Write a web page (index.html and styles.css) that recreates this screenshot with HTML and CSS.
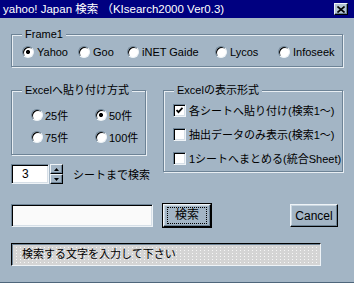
FILE: index.html
```html
<!DOCTYPE html>
<html lang="ja">
<head>
    <meta charset="UTF-8">
    <title>yahoo! Japan 検索</title>
    <link rel="stylesheet" href="styles.css">
</head>
<body>
    <div class="window">
        <div class="titlebar">
            <span class="title">yahoo! Japan 検索 （KIsearch2000 Ver0.3)</span>
            <button class="close" type="button">
                <svg width="8" height="7" viewBox="0 0 8 7"><path d="M0.5 0.5 L7.5 6.5 M7.5 0.5 L0.5 6.5" stroke="#000" stroke-width="1.6"/></svg>
            </button>
        </div>

        <div class="client">
            <div class="group frame1">
                <div class="group-title">Frame1</div>
                <div class="engines">
                    <div class="opt"><span class="radio on"></span>Yahoo</div>
                    <div class="opt"><span class="radio"></span>Goo</div>
                    <div class="opt"><span class="radio"></span>iNET Gaide</div>
                    <div class="opt"><span class="radio"></span>Lycos</div>
                    <div class="opt"><span class="radio"></span>Infoseek</div>
                </div>
            </div>

            <div class="middle">
                <div class="left-col">
                    <div class="group paste">
                        <div class="group-title">Excelへ貼り付け方式</div>
                        <div class="counts">
                            <div class="opt narrow"><span class="radio"></span>25件</div>
                            <div class="opt narrow"><span class="radio on"></span>50件</div>
                            <div class="opt narrow"><span class="radio"></span>75件</div>
                            <div class="opt narrow"><span class="radio"></span>100件</div>
                        </div>
                    </div>
                    <div class="sheets">
                        <div class="spin-value">3</div>
                        <div class="spin-btns">
                            <span class="spin-btn"><svg width="5" height="3" viewBox="0 0 5 3"><path d="M2.5 0 L5 3 L0 3 Z" fill="#000"/></svg></span>
                            <span class="spin-btn"><svg width="5" height="3" viewBox="0 0 5 3"><path d="M0 0 L5 0 L2.5 3 Z" fill="#000"/></svg></span>
                        </div>
                        <span class="sheets-label">シートまで検索</span>
                    </div>
                </div>

                <div class="group display">
                    <div class="group-title">Excelの表示形式</div>
                    <div class="checks">
                        <div class="opt"><span class="check"><svg width="7" height="7" viewBox="0 0 7 7"><path d="M0.5 3 L2.5 5.2 L6.5 0.8" fill="none" stroke="#000" stroke-width="1.8"/></svg></span>各シートへ貼り付け(検索1～)</div>
                        <div class="opt"><span class="check"></span>抽出データのみ表示(検索1～)</div>
                        <div class="opt"><span class="check"></span>1シートへまとめる(統合Sheet)</div>
                    </div>
                </div>
            </div>

            <div class="search-row">
                <div class="textbox"></div>
                <button class="btn default" type="button"><span class="focus">検索</span></button>
                <button class="btn cancel" type="button">Cancel</button>
            </div>

            <div class="status">検索する文字を入力して下さい</div>
        </div>
    </div>
</body>
</html>
```

FILE: styles.css
```css
html {
    background: #a3b5c5;
}

body {
    margin: 0;
    font-family: "Liberation Sans", "Noto Sans CJK JP", sans-serif;
    font-size: 11px;
    color: #000;
}

.window {
    width: 354px;
    height: 282px;
    background: #a3b5c5;
    border-bottom: 1px solid #4e667b;
}

/* title bar */
.titlebar {
    height: 18px;
    background: #000080;
    color: #fff;
    display: flex;
    align-items: center;
    justify-content: space-between;
    padding: 0 6px 0 3px;
    font-size: 11.5px;
}

.title {
    line-height: 18px;
    white-space: nowrap;
}

.close {
    width: 14px;
    height: 12px;
    padding: 0;
    margin: 0;
    display: flex;
    align-items: center;
    justify-content: center;
    background: #b4c4d2;
    border: 1px solid;
    border-color: #eef3f7 #000 #000 #eef3f7;
    box-shadow: inset -1px -1px 0 #6d8396;
}

.client {
    padding: 16px 11px 0;
}

/* etched group box */
.group {
    border: 1px solid #6d8396;
    box-shadow: inset 1px 1px 0 #e8eef3, 1px 1px 0 #e8eef3;
}

.group-title {
    display: table;
    margin: -8px 0 0 10px;
    padding: 0 3px;
    line-height: 14px;
    background: #a3b5c5;
    white-space: nowrap;
}

.opt {
    display: flex;
    align-items: center;
    gap: 3px;
    height: 14px;
    white-space: nowrap;
}

.opt.narrow {
    gap: 2px;
}

.radio {
    flex: none;
    width: 12px;
    height: 12px;
    box-sizing: border-box;
    border-radius: 50%;
    border: 1px solid;
    border-color: #6d8396 #eef3f7 #eef3f7 #6d8396;
    box-shadow: inset 1px 1px 0 #000;
    background: #fff;
}

.radio.on {
    background: radial-gradient(circle, #000 0, #000 1.8px, #fff 2.3px);
}

.check {
    flex: none;
    width: 13px;
    height: 13px;
    box-sizing: border-box;
    border: 1px solid;
    border-color: #6d8396 #eef3f7 #eef3f7 #6d8396;
    box-shadow: inset 1px 1px 0 #000, inset -1px -1px 0 #d6dfe7;
    background: #fff;
    display: flex;
    align-items: center;
    justify-content: center;
}

/* Frame1 */
.frame1 {
    padding: 0 0 7px;
}

.engines {
    display: grid;
    grid-template-columns: 56px 49px 88px 63px auto;
    margin-top: 4px;
    padding-left: 10px;
}

/* middle section */
.middle {
    display: flex;
    align-items: flex-start;
    gap: 17px;
    margin-top: 23px;
}

.left-col {
    width: 135px;
    flex: none;
}

.paste {
    padding: 0 0 10px;
}

.counts {
    display: grid;
    grid-template-columns: 64px auto;
    row-gap: 8px;
    margin-top: 11px;
    padding-left: 19px;
}

.sheets {
    display: flex;
    align-items: center;
    margin-top: 9px;
    height: 20px;
}

.spin-value {
    flex: none;
    width: 38px;
    height: 20px;
    box-sizing: border-box;
    border: 1px solid;
    border-color: #6d8396 #eef3f7 #eef3f7 #6d8396;
    box-shadow: inset 1px 1px 0 #000, inset -1px -1px 0 #d6dfe7;
    background: #fff;
    padding-left: 10px;
    line-height: 18px;
    font-size: 12px;
}

.spin-btns {
    flex: none;
    display: flex;
    flex-direction: column;
    margin-left: 1px;
}

.spin-btn {
    width: 13px;
    height: 10px;
    box-sizing: border-box;
    display: flex;
    align-items: center;
    justify-content: center;
    border: 1px solid;
    border-color: #eef3f7 #000 #000 #eef3f7;
    box-shadow: inset -1px -1px 0 #6d8396;
}

.sheets-label {
    margin-left: 10px;
    white-space: nowrap;
}

.display {
    flex: 1;
    padding: 0 0 6px;
}

.checks {
    display: flex;
    flex-direction: column;
    gap: 10px;
    margin-top: 6px;
    padding-left: 9px;
}

/* search row */
.search-row {
    display: flex;
    align-items: center;
    margin-top: 20px;
    height: 23px;
}

.textbox {
    width: 142px;
    height: 23px;
    box-sizing: border-box;
    border: 1px solid;
    border-color: #6d8396 #eef3f7 #eef3f7 #6d8396;
    box-shadow: inset 1px 1px 0 #000, inset -1px -1px 0 #d6dfe7;
    background: #fafafa;
}

.btn {
    font: inherit;
    font-size: 12px;
    height: 23px;
    width: 48px;
    margin: 0;
    padding: 0;
    background: #a3b5c5;
    color: #000;
    border: 1px solid;
    border-color: #eef3f7 #000 #000 #eef3f7;
    box-shadow: inset -1px -1px 0 #6d8396, inset 1px 1px 0 #c9d6e0;
}

.btn.default {
    margin-left: 10px;
    box-shadow: 0 0 0 1px #000, inset -1px -1px 0 #6d8396, inset 1px 1px 0 #c9d6e0;
    display: flex;
    align-items: center;
    justify-content: center;
}

.focus {
    display: block;
    width: 38px;
    height: 15px;
    line-height: 15px;
    outline: 1px dotted #000;
}

.btn.cancel {
    margin-left: auto;
    margin-right: 5px;
}

/* status line */
.status {
    margin-top: 16px;
    width: 310px;
    height: 23px;
    box-sizing: border-box;
    border: 1px solid;
    border-color: #000 #eef3f7 #eef3f7 #000;
    box-shadow: inset 1px 1px 0 #6d8396;
    background-color: #d4d4d4;
    background-image: conic-gradient(at 1px 1px, transparent 75%, #f6f6f6 0);
    background-size: 4px 3px;
    padding-left: 10px;
    line-height: 21px;
}
```
